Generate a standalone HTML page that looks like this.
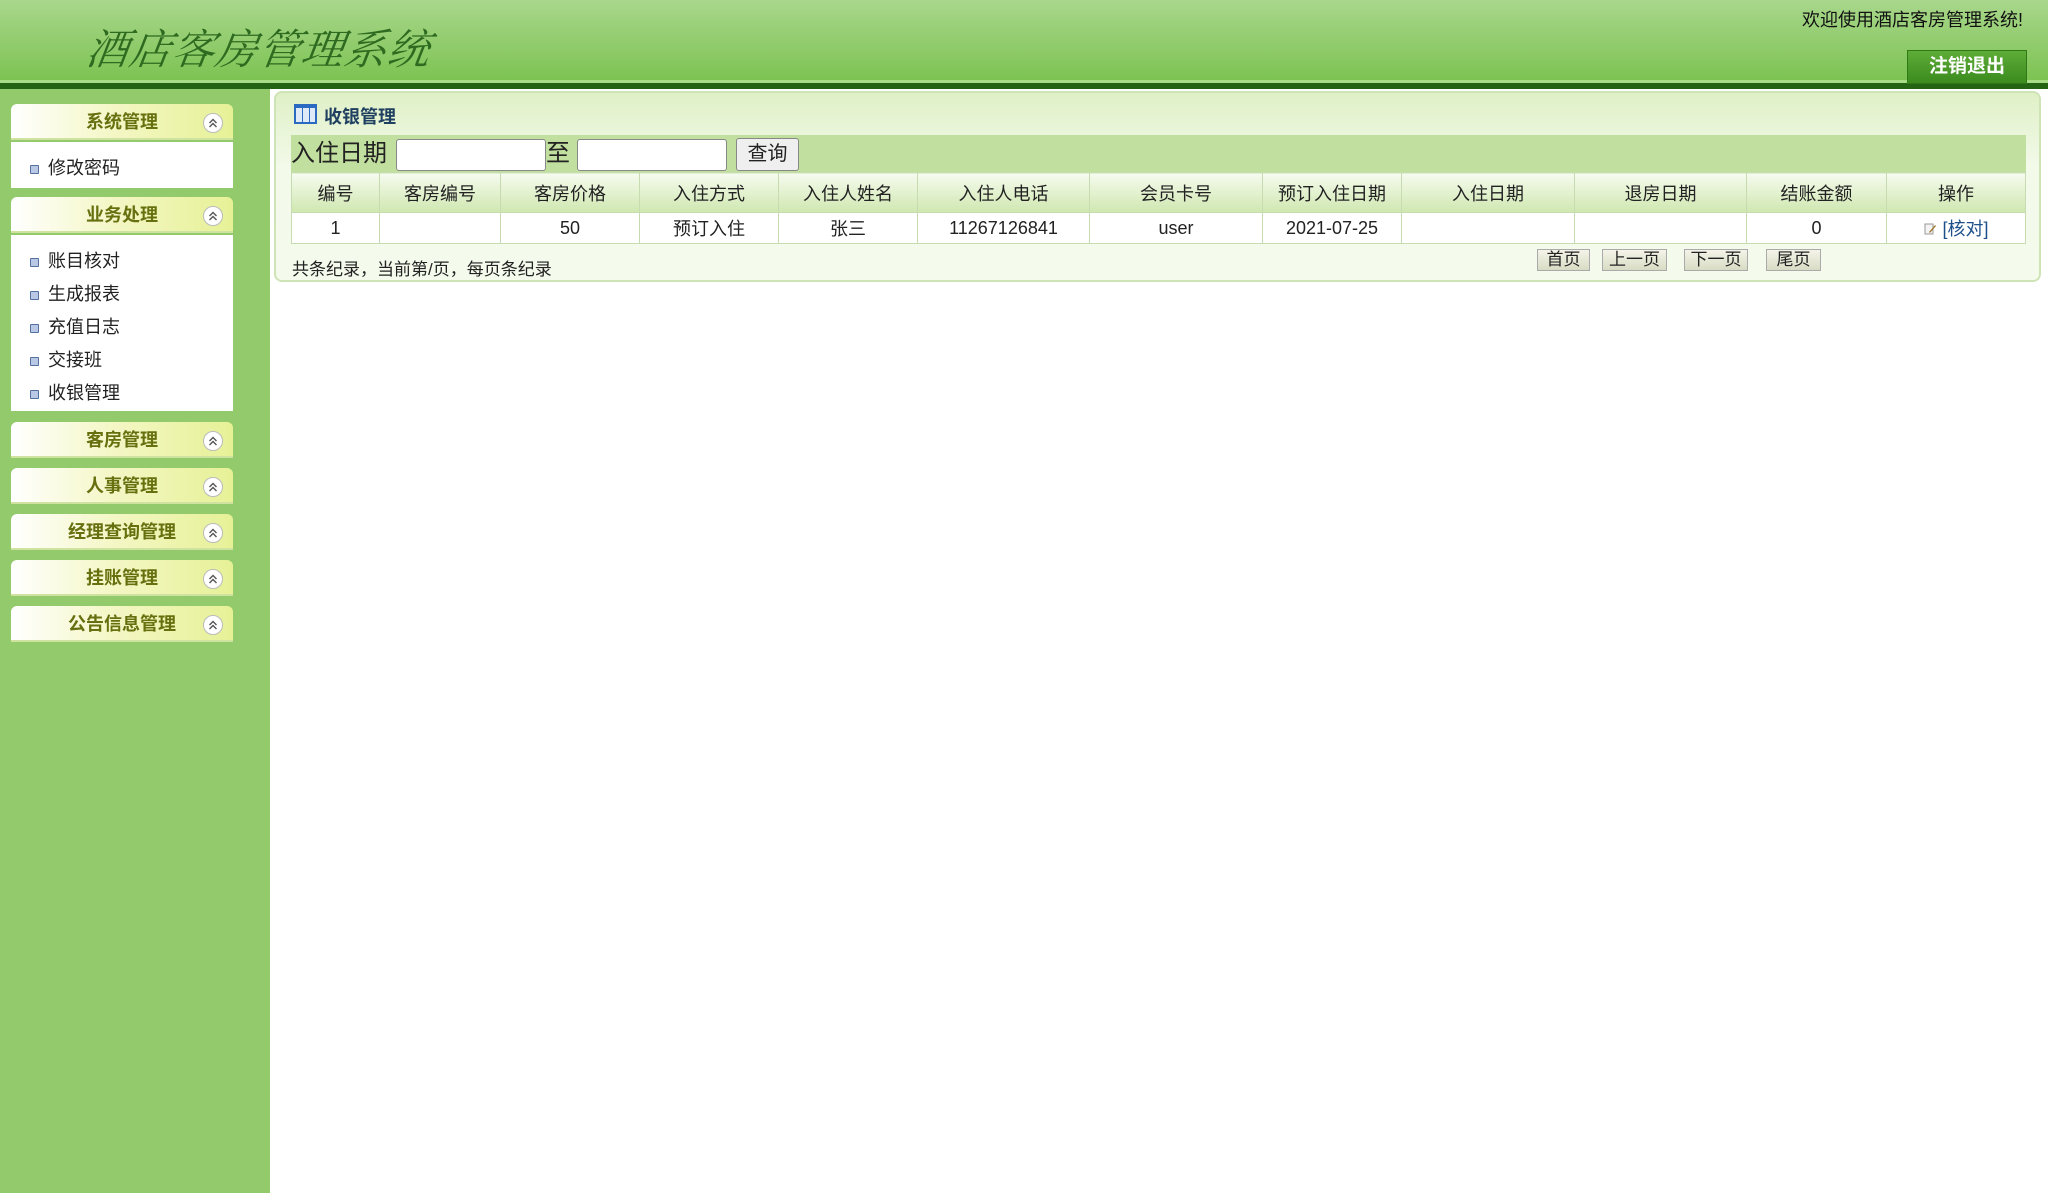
<!DOCTYPE html>
<html><head><meta charset="utf-8"><style>
*{margin:0;padding:0;box-sizing:border-box}
body{width:2048px;height:1193px;overflow:hidden;background:#fff;font-family:"Liberation Sans","Noto Sans CJK SC",sans-serif;position:relative;color:#222}
.hd{position:absolute;left:0;top:0;width:2048px;height:83px;background:linear-gradient(#a9d78c,#7bc250)}
.hd:after{content:"";position:absolute;left:0;right:0;bottom:0;height:3px;background:#a8dc88}
.line{position:absolute;left:0;top:83px;width:2048px;height:6px;background:#256314}
.title{position:absolute;left:87px;top:17px;font-size:42px;font-style:italic;color:#2e6a1f;font-family:"Noto Serif CJK SC",serif;letter-spacing:1px;transform:skewX(-8deg)}
.wel{position:absolute;right:25px;top:6px;font-size:18px;color:#111}
.out{position:absolute;left:1907px;top:50px;width:120px;height:34px;background:linear-gradient(#5fad38,#3a8a1e);border:1px solid #2f7a17;color:#fff;font-weight:bold;font-size:19px;text-align:center;line-height:32px}
.side{position:absolute;left:0;top:89px;width:270px;height:1104px;background:#93ca6c}
.ph{position:absolute;left:11px;width:222px;height:36px;border-radius:6px 6px 0 0;background:linear-gradient(90deg,#fff,#f4f7c6 45%,#e6f196);border-bottom:2px solid #cfe2a0;text-align:center;line-height:36px;font-weight:bold;font-size:18px;color:#66700f}
.ph svg{position:absolute;right:9px;top:8px}
.pb{position:absolute;left:11px;width:222px;background:#fff}
.pb div{height:33px;line-height:33px;font-size:18px;padding-left:37px;position:relative}
.pb div:before{content:"";position:absolute;left:19px;top:13px;width:7px;height:7px;border:1px solid #5470a0;background:#b9c8e4;border-radius:1px}
.main{position:absolute;left:274px;top:91px;width:1767px;height:191px;border:2px solid #cfe4b6;border-radius:8px;background:linear-gradient(#dff0c6,#f3faea 40%,#f4fbec)}
.mt{position:absolute;left:18px;top:10px;font-size:18px;font-weight:bold;color:#1f4060;padding-left:30px}
.mt b{position:absolute;left:0;top:1px;width:23px;height:20px;border:2px solid #2a6ac0;border-top-width:4px;background:repeating-linear-gradient(90deg,#dfeaf8 0 6px,#2a6ac0 6px 7px);}
.sb{position:absolute;left:291px;top:135px;width:1735px;height:37px;background:#c1df9e;font-size:24px;line-height:37px}
.sb input{position:absolute;top:4px;height:32px;border:1px solid #888;border-radius:3px;background:#fff}
.sb .q{position:absolute;left:445px;top:3px;width:63px;height:33px;border:1px solid #888;border-radius:3px;background:#efefef;font-size:20px;line-height:31px;text-align:center}
table{position:absolute;left:291px;top:172px;width:1735px;border-collapse:collapse;font-size:18px;text-align:center}
th{height:40px;font-weight:normal;background:linear-gradient(#f6fbef,#e2f1cf 50%,#cfe7b0);border:1px solid #c6dcb0}
td{height:31px;background:#fff;border:1px solid #c6dcb0}
.ft{position:absolute;left:292px;top:255px;font-size:17px}
.pg{position:absolute;top:249px;height:22px;border:1px solid #aaa;background:linear-gradient(#f4f4e8,#d8dcc4);font-size:17px;line-height:20px;text-align:center}
</style></head><body>
<div class="hd"></div><div class="line"></div>
<div class="title">酒店客房管理系统</div>
<div class="wel">欢迎使用酒店客房管理系统!</div>
<div class="out">注销退出</div>
<div class="side"></div>
<svg width="0" height="0" style="position:absolute"><defs><g id="ch"><circle cx="11" cy="11" r="9.5" fill="#fff" stroke="#bbb"/><path d="M7.5 11 L11 7.5 L14.5 11 M7.5 15 L11 11.5 L14.5 15" fill="none" stroke="#555" stroke-width="1.4"/></g></defs></svg>
<div class="ph" style="top:104px">系统管理<svg width="22" height="22"><use href="#ch"/></svg></div>
<div class="pb" style="top:142px;height:46px;padding-top:10px"><div>修改密码</div></div>
<div class="ph" style="top:197px">业务处理<svg width="22" height="22"><use href="#ch"/></svg></div>
<div class="pb" style="top:235px;height:176px;padding-top:10px"><div>账目核对</div><div>生成报表</div><div>充值日志</div><div>交接班</div><div>收银管理</div></div>
<div class="ph" style="top:422px">客房管理<svg width="22" height="22"><use href="#ch"/></svg></div>
<div class="ph" style="top:468px">人事管理<svg width="22" height="22"><use href="#ch"/></svg></div>
<div class="ph" style="top:514px">经理查询管理<svg width="22" height="22"><use href="#ch"/></svg></div>
<div class="ph" style="top:560px">挂账管理<svg width="22" height="22"><use href="#ch"/></svg></div>
<div class="ph" style="top:606px">公告信息管理<svg width="22" height="22"><use href="#ch"/></svg></div>
<div class="main"><div class="mt"><b></b>收银管理</div></div>
<div class="sb">入住日期<input style="left:105px;width:150px"><span style="position:absolute;left:255px">至</span><input style="left:286px;width:150px"><div class="q">查询</div></div>
<table><tr><th style="width:88px">编号</th><th style="width:121px">客房编号</th><th style="width:139px">客房价格</th><th style="width:139px">入住方式</th><th style="width:139px">入住人姓名</th><th style="width:172px">入住人电话</th><th style="width:173px">会员卡号</th><th style="width:139px">预订入住日期</th><th style="width:173px">入住日期</th><th style="width:172px">退房日期</th><th style="width:140px">结账金额</th><th>操作</th></tr>
<tr><td>1</td><td></td><td>50</td><td>预订入住</td><td>张三</td><td>11267126841</td><td>user</td><td>2021-07-25</td><td></td><td></td><td>0</td><td><svg width="14" height="14" style="vertical-align:-1px"><path d="M2 2h8v10H2z" fill="#f4f4f4" stroke="#999"/><path d="M6 10 L12 3 L13 4 L7 11z" fill="#a07a30"/></svg> <span style="color:#1d4f8a">[核对]</span></td></tr></table>
<div class="ft">共条纪录，当前第/页，每页条纪录</div>
<div class="pg" style="left:1537px;width:53px">首页</div>
<div class="pg" style="left:1602px;width:65px">上一页</div>
<div class="pg" style="left:1684px;width:64px">下一页</div>
<div class="pg" style="left:1766px;width:55px">尾页</div>
</body></html>
